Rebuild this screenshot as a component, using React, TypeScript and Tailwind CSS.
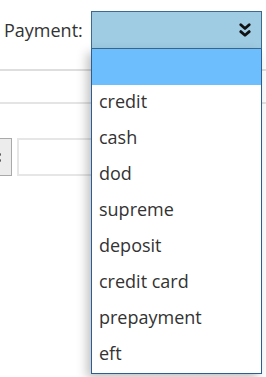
import React from "react";

const options = ["", "credit", "cash", "dod", "supreme", "deposit", "credit card", "prepayment", "eft"];

function Chevrons() {
  return (
    <svg width="12" height="15" viewBox="0 0 12 15" fill="none">
      <path d="M1.8 1.8 L6 5.5 L10.2 1.8" stroke="#111" strokeWidth="2.8" strokeLinecap="round" strokeLinejoin="round" />
      <path d="M1.8 8.6 L6 12.3 L10.2 8.6" stroke="#111" strokeWidth="2.8" strokeLinecap="round" strokeLinejoin="round" />
    </svg>
  );
}

export default function App() {
  return (
    <div
      className="relative w-[266px] h-[377px] overflow-hidden bg-white text-[#333]"
      style={{ fontFamily: '"Open Sans", "Noto Sans", sans-serif' }}
    >
      <div className="flex items-center pt-[11px]">
        <div className="w-[91px] pl-[4px] text-[18px] leading-[24px] text-[#333]">Payment:</div>
        <div className="flex h-[38px] w-[171px] items-center justify-end border border-[#3d6b8f] bg-[#9fcce3] pr-[10px]">
          <Chevrons />
        </div>
      </div>

      <div className="mt-[20px] h-[2px] w-full bg-[#dedede]" />
      <div className="mt-[31px] h-[2px] w-full bg-[#e4e4e4]" />

      <div className="mt-[34px] flex items-center gap-[5px]">
        <div className="-ml-[14px] flex h-[38px] w-[26px] items-center justify-end border border-[#a9a9a9] bg-[#ececec] pr-[10px]">
          <div className="flex flex-col gap-[3px]">
            <div className="h-[3px] w-[3px] rounded-full bg-[#555]" />
            <div className="h-[3px] w-[3px] rounded-full bg-[#555]" />
          </div>
        </div>
        <div className="h-[38px] w-[200px] border-2 border-[#e6e6e6] bg-white" />
      </div>

      <div className="absolute left-[91px] top-[49px] w-[171px] border-x border-b border-[#2b5f94] bg-white shadow-[-4px_4px_10px_rgba(0,0,0,0.25)]">
        {options.map((o, i) => (
          <div
            key={i}
            className={
              i === 0
                ? "h-[36px] bg-[#6cbefd] pl-[7px] text-[18px] leading-[32px]"
                : "h-[36px] pl-[7px] text-[18px] leading-[32px] text-[#333]"
            }
          >
            {o}
          </div>
        ))}
      </div>
    </div>
  );
}
